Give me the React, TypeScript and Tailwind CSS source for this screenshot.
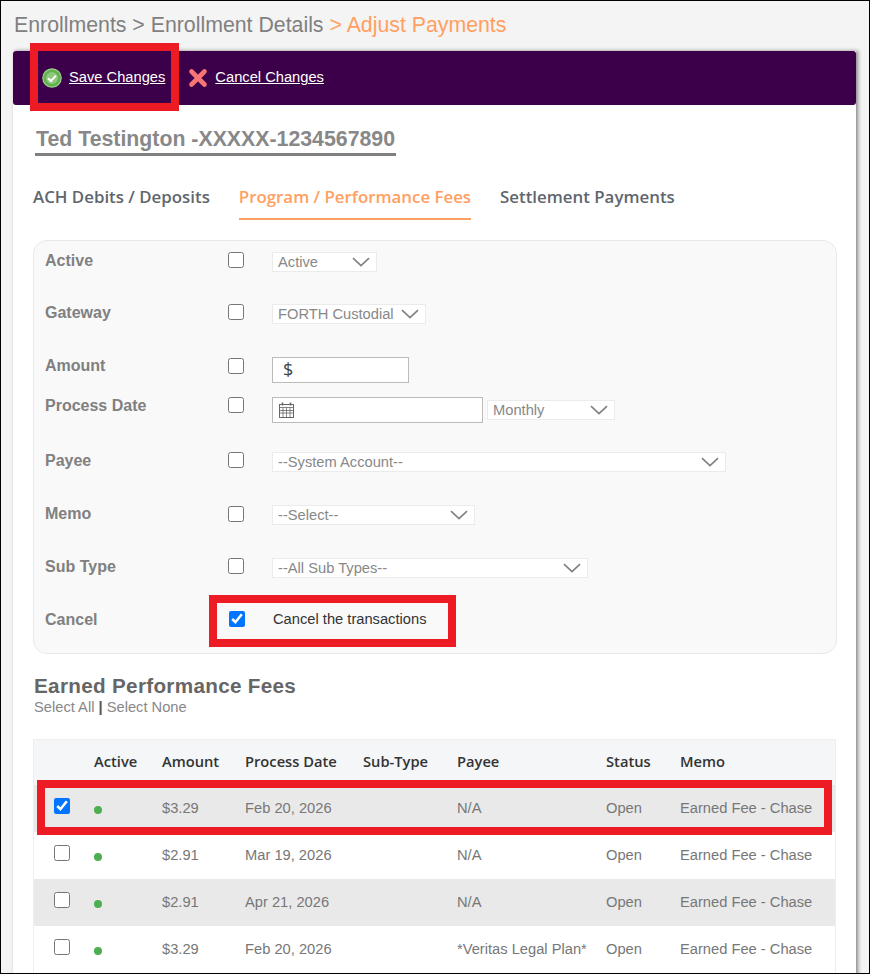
const sans = "font-['Liberation_Sans',Arial,sans-serif]"

function Chevron({ className = '' }: { className?: string }) {
  return (
    <svg width="18" height="10" viewBox="0 0 18 10" fill="none" stroke="#808080" strokeWidth="1.6" className={className}>
      <path d="M1 1.2 9 8.6 17 1.2" />
    </svg>
  )
}

function FakeSelect({ label, className }: { label: string; className: string }) {
  return (
    <div className={`flex h-[20px] items-center justify-between border border-[#ebebeb] bg-white pl-[5px] pr-[6px] text-[14.7px] text-[#888] ${className}`}>
      <span className="whitespace-nowrap">{label}</span>
      <Chevron />
    </div>
  )
}

function FormRow({ label, offset, labelShift = 'translate-y-px', children }: { label: string; offset: string; labelShift?: string; children?: React.ReactNode }) {
  return (
    <div className={`flex h-[20px] items-center ${offset}`}>
      <div className={`w-[183px] text-[16px] font-bold text-[#808080] ${labelShift}`}>{label}</div>
      <input type="checkbox" readOnly className="h-[16px] w-[16px]" />
      <div className="ml-[28px] flex items-center">{children}</div>
    </div>
  )
}

const rows = [
  { checked: true, amount: '$3.29', date: 'Feb 20, 2026', payee: 'N/A' },
  { checked: false, amount: '$2.91', date: 'Mar 19, 2026', payee: 'N/A' },
  { checked: false, amount: '$2.91', date: 'Apr 21, 2026', payee: 'N/A' },
  { checked: false, amount: '$3.29', date: 'Feb 20, 2026', payee: '*Veritas Legal Plan*' },
]

const tableCols = 'grid grid-cols-[60px_68px_83px_118px_94px_149px_74px_1fr] items-center'

export default function App() {
  return (
    <div className={`relative h-[974px] w-[870px] overflow-hidden border border-black bg-[#f4f4f4] ${sans}`}>
      {/* Breadcrumb */}
      <div className="pl-[13px] pt-[10px] text-[21.3px] leading-[28px] text-[#808080]">
        Enrollments &gt; Enrollment Details <span className="text-[#ffa061]">&gt; Adjust Payments</span>
      </div>

      <div className="ml-[12px] mt-[12px] h-[960px] w-[843px] bg-white shadow-[2px_0_4px_rgba(0,0,0,0.45)]">
        {/* Action bar */}
        <div className="flex h-[54px] items-center rounded-[3px] bg-[#3b0049] pb-[1px] pl-[29px] text-[14.7px] text-white">
          <svg width="20" height="20" viewBox="0 0 20 20">
            <circle cx="10" cy="10" r="9.2" fill="#63b04f" stroke="#9ad08a" strokeWidth="1.2" />
            <circle cx="10" cy="10" r="6" fill="#8cc97b" />
            <path d="M6 10.2 8.9 13 14 7.6" fill="none" stroke="#fff" strokeWidth="2" />
          </svg>
          <span className="ml-[7px] underline">Save Changes</span>
          <svg width="20" height="20" viewBox="0 0 20 20" className="ml-[23px]">
            <path d="M3.5 3.5 16.5 16.5M16.5 3.5 3.5 16.5" stroke="#f87575" strokeWidth="4.6" strokeLinecap="round" />
          </svg>
          <span className="ml-[7px] underline">Cancel Changes</span>
        </div>

        <div className="pl-[20px] pr-[19px]">
          {/* Name */}
          <div className="pt-[21px]">
            <span className="ml-[2px] inline-block border-b-[3px] border-[#808080] pl-px pr-px text-[21.3px] font-bold leading-[27px] text-[#888]">
              Ted Testington -XXXXX-1234567890
            </span>
          </div>

          {/* Tabs */}
          <div className="mt-[29px] flex font-['Open_Sans',sans-serif] text-[16.85px] font-semibold leading-[24px]">
            <div className="h-[35px] text-[#5f666d]">ACH Debits / Deposits</div>
            <div className="ml-[29px] h-[35px] border-b-2 border-[#ffa061] text-[#ffa061]">Program / Performance Fees</div>
            <div className="ml-[29px] h-[35px] text-[#5f666d]">Settlement Payments</div>
          </div>

          {/* Filter panel */}
          <div className="mt-[20px] h-[414px] w-[804px] rounded-[14px] border border-[#e9e9e9] bg-[#f9f9f9] pl-[11px] pt-[9px]">
            <FormRow label="Active" offset="">
              <FakeSelect label="Active" className="mt-[4px] w-[105px]" />
            </FormRow>
            <FormRow label="Gateway" offset="mt-[32px]">
              <FakeSelect label="FORTH Custodial" className="mt-[4px] w-[154px]" />
            </FormRow>
            <FormRow label="Amount" offset="mt-[34px]" labelShift="">
              <div className="mt-[7px] flex h-[26px] w-[137px] items-center border border-[#bbb] bg-white pl-[10px] font-['Open_Sans',sans-serif] text-[18px] text-[#444]">$</div>
            </FormRow>
            <FormRow label="Process Date" offset="mt-[19px]">
              <div className="mt-[10px] flex h-[26px] w-[211px] items-center border border-[#bbb] bg-white pl-[6px]">
                <svg width="15" height="16" viewBox="0 0 15 16" fill="none" stroke="#666" strokeWidth="1">
                  <rect x="0.5" y="2.5" width="14" height="13" />
                  <path d="M0.5 5.5h14M0.5 8.5h14M0.5 11h14M4 5.5v10M7.5 5.5v10M11 5.5v10" strokeWidth="0.8" />
                  <path d="M3.5 0.5v3M11.5 0.5v3" strokeWidth="1.6" />
                </svg>
              </div>
              <FakeSelect label="Monthly" className="ml-[4px] mt-[10px] w-[128px]" />
            </FormRow>
            <FormRow label="Payee" offset="mt-[35px]">
              <FakeSelect label="--System Account--" className="mt-[4px] w-[454px]" />
            </FormRow>
            <FormRow label="Memo" offset="mt-[34px]" labelShift="">
              <FakeSelect label="--Select--" className="mt-[2px] w-[203px]" />
            </FormRow>
            <FormRow label="Sub Type" offset="mt-[32px]">
              <FakeSelect label="--All Sub Types--" className="mt-[4px] w-[316px]" />
            </FormRow>
            <div className="mt-[33px] flex h-[20px] items-center">
              <div className="w-[184px] translate-y-px text-[16px] font-bold text-[#808080]">Cancel</div>
              <input type="checkbox" readOnly checked className="h-[16px] w-[16px]" />
              <div className="ml-[28px] text-[14.7px] text-[#333]">Cancel the transactions</div>
            </div>
          </div>

          {/* Earned fees */}
          <div className="mt-[19px] pl-px text-[20.7px] font-bold leading-[26px] tracking-[0.3px] text-[#666]">Earned Performance Fees</div>
          <div className="pl-px text-[14.7px] leading-[16px] text-[#888]">
            Select All <span className="font-bold text-[#555]">|</span> Select None
          </div>

          <div className="mt-[24px] w-[803px] border-x border-t border-[#eeeeee]">
            <div className={`${tableCols} h-[45px] bg-[#f5f6f8] pb-[2px] font-['Open_Sans',sans-serif] text-[14.7px] font-semibold text-[#333]`}>
              <div />
              <div>Active</div>
              <div>Amount</div>
              <div>Process Date</div>
              <div>Sub-Type</div>
              <div>Payee</div>
              <div>Status</div>
              <div>Memo</div>
            </div>
            {rows.map((row, i) => (
              <div key={i} className={`${tableCols} h-[47px] text-[14.7px] text-[#777] ${i % 2 === 0 ? 'bg-[#e9e9e9]' : 'bg-white'}`}>
                <div className="pl-[20px]">
                  <input type="checkbox" readOnly checked={row.checked} className="block h-[16px] w-[16px] -translate-y-[3px]" />
                </div>
                <div>
                  <div className="h-[8px] w-[8px] translate-y-px rounded-full bg-[#4caf50]" />
                </div>
                <div>{row.amount}</div>
                <div>{row.date}</div>
                <div />
                <div className="whitespace-nowrap">{row.payee}</div>
                <div>Open</div>
                <div className="whitespace-nowrap">Earned Fee - Chase</div>
              </div>
            ))}
          </div>
        </div>
      </div>

      {/* Red callouts drawn over the page */}
      <div className="absolute left-[29px] top-[42px] h-[68px] w-[149px] border-[8px] border-[#ed1c24]" />
      <div className="absolute left-[208px] top-[594px] h-[52px] w-[247px] border-[8px] border-[#ed1c24]" />
      <div className="absolute left-[36px] top-[779px] h-[55px] w-[795px] border-[8px] border-[#ed1c24]" />
    </div>
  )
}
